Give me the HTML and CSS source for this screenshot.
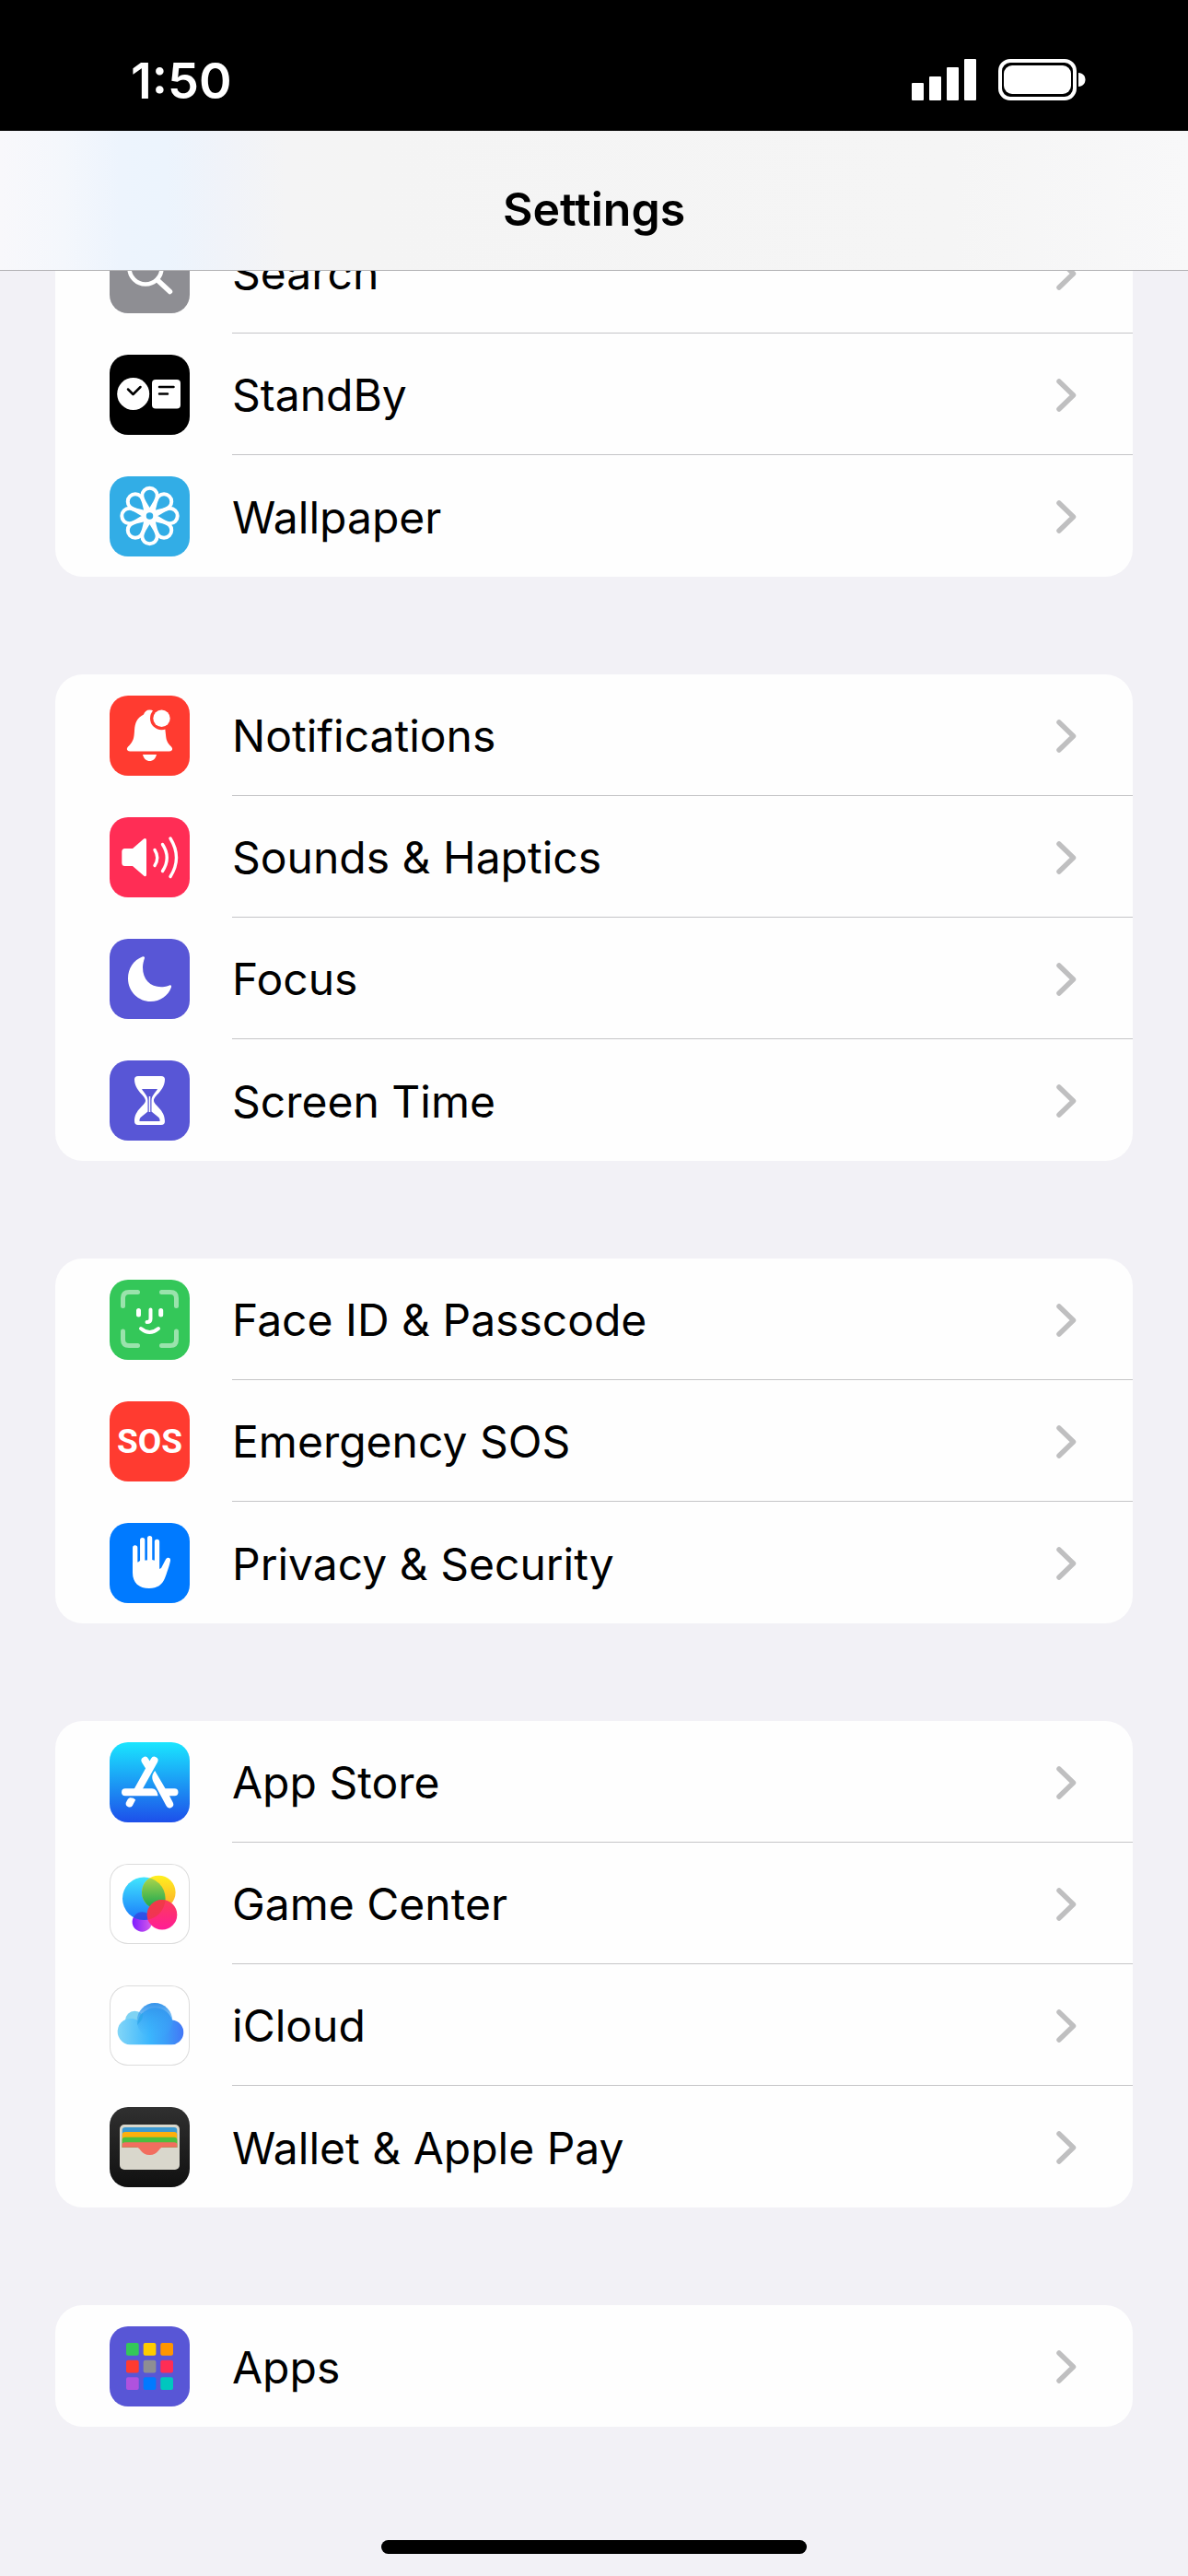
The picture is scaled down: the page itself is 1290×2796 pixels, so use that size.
FILE: index.html
```html
<!DOCTYPE html>
<html lang="en">
<head>
    <meta charset="UTF-8">
    <meta name="viewport" content="width=device-width, initial-scale=1.0">
    <title>Settings</title>
    <link rel="stylesheet" href="styles.css">
</head>
<body>

    <!-- Shared chevron -->
    <svg class="sprite" width="0" height="0" aria-hidden="true">
        <symbol id="chevron" viewBox="0 0 22 36">
            <path d="M3 3 L18.5 18 L3 33" fill="none" stroke="#bfbfc0" stroke-width="5.5" stroke-linecap="round" stroke-linejoin="round"/>
        </symbol>
    </svg>

    <header class="top">
        <div class="status-bar">
            <span class="time">1:50</span>
            <div class="status-icons">
                <svg class="signal" viewBox="0 0 70 46" aria-label="Signal">
                    <rect x="0" y="26" width="13" height="19" rx="1"/>
                    <rect x="19" y="19" width="13" height="26" rx="1"/>
                    <rect x="38" y="9" width="13" height="36" rx="1"/>
                    <rect x="57" y="0" width="13" height="45" rx="1"/>
                </svg>
                <svg class="battery" viewBox="0 0 95 46" aria-label="Battery">
                    <rect x="2" y="2" width="81" height="41" rx="11" fill="none" stroke="#fff" stroke-width="4"/>
                    <rect x="6" y="7" width="73" height="31" rx="9"/>
                    <path d="M87 15 C92 15 94.5 19 94.5 22.5 C94.5 26 92 30 87 30 Z"/>
                </svg>
            </div>
        </div>
        <div class="nav-bar">
            <h1>Settings</h1>
        </div>
    </header>

    <main class="settings">
        <ul class="group">
            <li><a class="row" href="#search">
                <svg class="icon gray" viewBox="0 0 87 87">
                    <circle cx="39" cy="38" r="17.5" fill="none" stroke="#fff" stroke-width="4.5"/>
                    <path d="M52 51 L65.5 63.5" stroke="#fff" stroke-width="5.5" stroke-linecap="round"/>
                </svg>
                <span class="label">Search<svg class="chevron"><use href="#chevron"/></svg></span>
            </a></li>
            <li><a class="row" href="#standby">
                <svg class="icon black" viewBox="0 0 87 87">
                    <circle cx="25.7" cy="42.5" r="17.5" fill="#fff"/>
                    <rect x="46" y="27" width="31" height="31.5" rx="4" fill="#fff"/>
                    <path d="M20 37.5 L25.5 43 L33.5 35 M54 35 H69.5 M54 42.5 H63" fill="none" stroke="#000" stroke-width="2.5" stroke-linecap="round" stroke-linejoin="round"/>
                </svg>
                <span class="label">StandBy<svg class="chevron"><use href="#chevron"/></svg></span>
            </a></li>
            <li><a class="row" href="#wallpaper">
                <svg class="icon cyan" viewBox="0 0 87 87">
                    <defs>
                        <path id="petal" d="M43.5 38.5 C41 32 35.3 27 35.3 21 A8.2 8.2 0 0 1 51.7 21 C51.7 27 46 32 43.5 38.5 Z"/>
                    </defs>
                    <g fill="none" stroke="#fff" stroke-width="4">
                        <use href="#petal"/>
                        <use href="#petal" transform="rotate(45 43.5 43)"/>
                        <use href="#petal" transform="rotate(90 43.5 43)"/>
                        <use href="#petal" transform="rotate(135 43.5 43)"/>
                        <use href="#petal" transform="rotate(180 43.5 43)"/>
                        <use href="#petal" transform="rotate(225 43.5 43)"/>
                        <use href="#petal" transform="rotate(270 43.5 43)"/>
                        <use href="#petal" transform="rotate(315 43.5 43)"/>
                    </g>
                    <circle cx="43.5" cy="43" r="5" fill="#32ade6" stroke="#fff" stroke-width="2.5"/>
                </svg>
                <span class="label">Wallpaper<svg class="chevron"><use href="#chevron"/></svg></span>
            </a></li>
        </ul>

        <ul class="group">
            <li><a class="row" href="#notifications">
                <svg class="icon red" viewBox="0 0 87 87">
                    <path d="M43.5 15.5 C40 15.5 38 17.5 37 20.5 C30 24 27.5 29 27 38 C26.5 46 26 49 21.5 54 C19 56.5 18.6 57.5 19 58.7 Q19.5 60.5 22 60.5 H65 Q67.5 60.5 68 58.7 C68.4 57.5 68 56.5 65.5 54 C61 49 61.5 46 60.5 38 C60 29 57 24 50 20.5 C49 17.5 47 15.5 43.5 15.5 Z" fill="#fff"/>
                    <path d="M36 64 H51 C50 68.5 47 71 43.5 71 C40 71 37 68.5 36 64 Z" fill="#fff"/>
                    <circle cx="56.5" cy="24.7" r="12.5" fill="#ff3b30"/>
                    <circle cx="56.5" cy="24.7" r="9.2" fill="#fff"/>
                </svg>
                <span class="label">Notifications<svg class="chevron"><use href="#chevron"/></svg></span>
            </a></li>
            <li><a class="row" href="#sounds">
                <svg class="icon pink" viewBox="0 0 87 87">
                    <path d="M16.5 34 H25 L36.5 24 C38.5 22.3 40 23 40 25 V62 C40 64.5 38.5 65 36.5 63 L25 53 H16.5 Q13.3 53 13.3 49.5 V37.5 Q13.3 34 16.5 34 Z" fill="#fff"/>
                    <path d="M49 35.5 Q54.5 44 49 52.5 M57.5 29.5 Q67 44 57.5 58.5 M66 23 Q79 44 66 64.5" fill="none" stroke="#fff" stroke-width="3.4" stroke-linecap="round"/>
                </svg>
                <span class="label">Sounds &amp; Haptics<svg class="chevron"><use href="#chevron"/></svg></span>
            </a></li>
            <li><a class="row" href="#focus">
                <svg class="icon indigo" viewBox="0 0 87 87">
                    <path d="M36 19.3 C26 23 20 32.5 20 43 C20 57.5 31.5 68 44.5 68 C55 68 63.5 62 67 52.5 C67.5 50.8 66.5 50 65 50.5 C61 52 58 52.2 56 52.2 C44 52.2 36 44 36 31 C36 27 37 24 38 21 C38.3 19.5 37.3 18.8 36 19.3 Z" fill="#fff"/>
                </svg>
                <span class="label">Focus<svg class="chevron"><use href="#chevron"/></svg></span>
            </a></li>
            <li><a class="row" href="#screen-time">
                <svg class="icon indigo" viewBox="0 0 87 87">
                    <path fill="#fff" fill-rule="evenodd" d="M31 17 H56 Q60 17 60 20.5 C60 33 48 38 48 43.5 C48 49 60 53 60 66 Q60 70 56 70 H31 Q27 70 27 66 C27 53 39 49 39 43.5 C39 38 27 33 27 20.5 Q27 17 31 17 Z M35 31 C37 35 41.5 38 41.5 43.5 V55.5 L33.5 62 Q32 64 32.5 66 H54.5 Q55 64 53.5 62 L45.5 55.5 V43.5 C45.5 38 50 35 52 31 Z"/>
                    <path d="M43.5 39 V56" stroke="#fff" stroke-width="1.5"/>
                </svg>
                <span class="label">Screen Time<svg class="chevron"><use href="#chevron"/></svg></span>
            </a></li>
        </ul>

        <ul class="group">
            <li><a class="row" href="#face-id">
                <svg class="icon green" viewBox="0 0 87 87">
                    <path d="M14.5 28.5 V20 Q14.5 13.5 21 13.5 H30.5 M56.5 13.5 H66 Q72.5 13.5 72.5 20 V28.5 M72.5 56 V65 Q72.5 71.5 66 71.5 H56.5 M30.5 71.5 H21 Q14.5 71.5 14.5 65 V56" fill="none" stroke="#fff" stroke-opacity=".5" stroke-width="5" stroke-linecap="round"/>
                    <path d="M31.5 33.5 V38 M55.7 33.5 V38" stroke="#fff" stroke-width="5" stroke-linecap="round"/>
                    <path d="M44.5 32.5 V42.5 Q44.5 46 40.5 46 M34 53 Q43.5 61 53 53" fill="none" stroke="#fff" stroke-width="4" stroke-linecap="round"/>
                </svg>
                <span class="label">Face ID &amp; Passcode<svg class="chevron"><use href="#chevron"/></svg></span>
            </a></li>
            <li><a class="row" href="#sos">
                <span class="icon red sos">SOS</span>
                <span class="label">Emergency SOS<svg class="chevron"><use href="#chevron"/></svg></span>
            </a></li>
            <li><a class="row" href="#privacy">
                <svg class="icon blue" viewBox="0 0 87 87">
                    <path d="M27.7 27 V50 M35.7 18.7 V50 M43.6 16.7 V50 M51.5 20.5 V50" stroke="#fff" stroke-width="5.3" stroke-linecap="round"/>
                    <path d="M25 43 L31 42.5 L33 41 L46 40 L54 42 V50 L56 49 L61 39.5 C62.5 36.5 66.7 37.5 66 41 C65 46 62 55 60 60 C57 67 52 71 43 71 C32 71 25 65 25 54 Z" fill="#fff"/>
                </svg>
                <span class="label">Privacy &amp; Security<svg class="chevron"><use href="#chevron"/></svg></span>
            </a></li>
        </ul>

        <ul class="group">
            <li><a class="row" href="#app-store">
                <svg class="icon app-store" viewBox="0 0 87 87">
                    <path d="M38.5 19.8 L43.5 28 M48.5 19.8 L30 53" stroke="#fff" stroke-width="8" stroke-linecap="round"/>
                    <path d="M17 50.3 H46 C49.5 50.3 52 53 52.5 58.3 H17 A4 4 0 0 1 17 50.3 Z" fill="#fff"/>
                    <path d="M49.2 31 C46 35 45.5 38.5 47.5 43 L61.5 69 A4 4 0 0 0 68.8 65.5 L65 58.3 H70.5 A4 4 0 0 0 70.5 50.3 H60.5 Z" fill="#fff"/>
                    <path d="M22 60.3 Q26 60 28.2 62.5 L24.8 69 A4 4 0 0 1 17.8 65.5 L20 61.5 Z" fill="#fff"/>
                </svg>
                <span class="label">App Store<svg class="chevron"><use href="#chevron"/></svg></span>
            </a></li>
            <li><a class="row" href="#game-center">
                <svg class="icon white" viewBox="0 0 87 87">
                    <defs>
                        <linearGradient id="gcBlue" x1="0" y1="0" x2="0" y2="1"><stop offset="0" stop-color="#41e6fd"/><stop offset="1" stop-color="#1a79fb"/></linearGradient>
                        <linearGradient id="gcYellow" x1="0" y1="0" x2="0" y2="1"><stop offset="0" stop-color="#fff01e"/><stop offset="1" stop-color="#fda92c"/></linearGradient>
                        <linearGradient id="gcGreen" x1="0" y1="0" x2="0" y2="1"><stop offset="0" stop-color="#b5d84b"/><stop offset="1" stop-color="#0fa451"/></linearGradient>
                        <linearGradient id="gcPink" x1="0" y1="0" x2="0" y2="1"><stop offset="0" stop-color="#fc3d58"/><stop offset="1" stop-color="#ff1c97"/></linearGradient>
                        <linearGradient id="gcPurple"><stop offset="0" stop-color="#7d1dff"/><stop offset="1" stop-color="#d95be9"/></linearGradient>
                        <clipPath id="gcClip"><circle cx="37.3" cy="37.7" r="23.3"/></clipPath>
                    </defs>
                    <circle cx="35.3" cy="63" r="10.7" fill="url(#gcPurple)"/>
                    <circle cx="37.3" cy="37.7" r="23.3" fill="url(#gcBlue)"/>
                    <circle cx="35.3" cy="63" r="10.7" fill="#3a30d8" opacity=".6" clip-path="url(#gcClip)"/>
                    <circle cx="53.3" cy="31" r="18.3" fill="url(#gcYellow)"/>
                    <circle cx="53.3" cy="31" r="18.3" fill="url(#gcGreen)" clip-path="url(#gcClip)"/>
                    <circle cx="57" cy="55.3" r="16.3" fill="url(#gcPink)"/>
                    <circle cx="57" cy="55.3" r="16.3" fill="#e83a3a" opacity=".6" clip-path="url(#gcClip)"/>
                </svg>
                <span class="label">Game Center<svg class="chevron"><use href="#chevron"/></svg></span>
            </a></li>
            <li><a class="row" href="#icloud">
                <svg class="icon white" viewBox="0 0 87 87">
                    <defs>
                        <linearGradient id="cloud" x1="8" y1="50" x2="79" y2="50" gradientUnits="userSpaceOnUse"><stop offset="0" stop-color="#84d6f7"/><stop offset=".5" stop-color="#3bb6fd"/><stop offset=".75" stop-color="#3b9df8"/><stop offset="1" stop-color="#4379f6"/></linearGradient>
                        <linearGradient id="cloudTop" x1="0" y1="0" x2="0" y2="1"><stop offset="0" stop-color="#3191ea"/><stop offset="1" stop-color="#3bb0fb" stop-opacity="0"/></linearGradient>
                    </defs>
                    <circle cx="27.3" cy="38" r="10.3" fill="#7fd3f3"/>
                    <path d="M22.5 64.3 A14.2 14.2 0 1 1 31 38.5 A19.3 19.3 0 0 1 68 37.5 A13.4 13.4 0 0 1 65.7 64.3 Z" fill="url(#cloud)"/>
                    <circle cx="49" cy="38.3" r="19.3" fill="url(#cloudTop)"/>
                    <path d="M30 43 Q31 33 36 29.5 Q38 35 30 43 Z" fill="#2ba6e8" opacity=".7"/>
                </svg>
                <span class="label">iCloud<svg class="chevron"><use href="#chevron"/></svg></span>
            </a></li>
            <li><a class="row" href="#wallet">
                <svg class="icon wallet" viewBox="0 0 87 87">
                    <rect x="11" y="19" width="65" height="49" rx="5" fill="#d9d7cc"/>
                    <path d="M13.7 44 V25 Q13.7 22 17 22 H70 Q73.3 22 73.3 25 V44 Z" fill="#3d99d1"/>
                    <path d="M13.7 44 V30 Q13.7 27 17 27 H70 Q73.3 27 73.3 30 V44 Z" fill="#fdaf0d"/>
                    <path d="M13.7 44 V36 Q13.7 32.7 17 32.7 H70 Q73.3 32.7 73.3 36 V44 Z" fill="#4dbf3e"/>
                    <path d="M13.7 43.7 V41 Q13.7 38.3 17 38.3 H70 Q73.3 38.3 73.3 41 V43.7 H58 C53 43.7 53 52 43.5 52 C34 52 34 43.7 29 43.7 Z" fill="#f26d5f"/>
                </svg>
                <span class="label">Wallet &amp; Apple Pay<svg class="chevron"><use href="#chevron"/></svg></span>
            </a></li>
        </ul>

        <ul class="group">
            <li><a class="row" href="#apps">
                <svg class="icon indigo" viewBox="0 0 87 87">
                    <rect x="18" y="18" width="13.7" height="13.7" rx="2" fill="#34c759"/>
                    <rect x="36.7" y="18" width="13.7" height="13.7" rx="2" fill="#ffcc00"/>
                    <rect x="55.3" y="18" width="13.7" height="13.7" rx="2" fill="#ff9500"/>
                    <rect x="18" y="36.7" width="13.7" height="13.7" rx="2" fill="#ff3b30"/>
                    <rect x="36.7" y="36.7" width="13.7" height="13.7" rx="2" fill="#8e8e93"/>
                    <rect x="55.3" y="36.7" width="13.7" height="13.7" rx="2" fill="#ff2d55"/>
                    <rect x="18" y="55.3" width="13.7" height="13.7" rx="2" fill="#af52de"/>
                    <rect x="36.7" y="55.3" width="13.7" height="13.7" rx="2" fill="#007aff"/>
                    <rect x="55.3" y="55.3" width="13.7" height="13.7" rx="2" fill="#00c7be"/>
                </svg>
                <span class="label">Apps<svg class="chevron"><use href="#chevron"/></svg></span>
            </a></li>
        </ul>
    </main>

    <footer class="home-area">
        <div class="home-indicator"></div>
    </footer>

</body>
</html>
```
FILE: styles.css
```css
* {
    margin: 0;
    padding: 0;
    box-sizing: border-box;
}

body {
    font-family: Inter, 'Liberation Sans', sans-serif;
    font-size: 48px;
    color: #000;
    background-color: #f2f1f6;
    min-height: 100vh;
    display: flex;
    flex-direction: column;
}

.sprite {
    position: absolute;
}

/* Header */
.top {
    position: sticky;
    top: 0;
    z-index: 1;
}

.status-bar {
    display: flex;
    justify-content: space-between;
    align-items: center;
    height: 142px;
    padding: 32px 111px 0 142px;
    background-color: #000;
    color: #fff;
}

.time {
    font-size: 54px;
    font-weight: 600;
}

.status-icons {
    display: flex;
    gap: 24px;
    fill: #fff;
}

.signal {
    width: 70px;
    height: 46px;
}

.battery {
    width: 95px;
    height: 46px;
}

.nav-bar {
    display: flex;
    justify-content: center;
    align-items: center;
    height: 152px;
    padding-top: 18px;
    border-bottom: 1px solid #b2b2b4;
    background: linear-gradient(90deg, #f8f8fb 0, #f4f7fc 70px, #edf4fd 130px, #ecf4fd 180px, #f0f3f9 240px, #f4f4f5 310px, #f4f4f4 400px, #f5f5f5 80%, #f8f8f9 100%);
}

h1 {
    font-size: 50px;
    font-weight: 600;
}

/* List, scrolled partly under the header */
.settings {
    margin-top: -64px;
    padding: 0 60px;
    display: flex;
    flex-direction: column;
    gap: 106px;
}

.group {
    list-style: none;
    background-color: #fefefe;
    border-radius: 30px;
    overflow: hidden;
}

.row {
    display: flex;
    align-items: center;
    gap: 46px;
    height: 132px;
    padding-left: 59px;
    color: #000;
    text-decoration: none;
}

.label {
    flex: 1;
    display: flex;
    justify-content: space-between;
    align-items: center;
    height: 132px;
    padding: 2px 61px 0 0;
    border-bottom: 1px solid #c5c5c7;
}

.group li:last-child .label {
    border-bottom: none;
}

.chevron {
    width: 22px;
    height: 36px;
}

/* Icons */
.icon {
    width: 87px;
    height: 87px;
    border-radius: 20px;
    flex-shrink: 0;
}

.gray {
    background-color: #8e8e93;
}

.black {
    background-color: #000;
}

.cyan {
    background-color: #32ade6;
}

.red {
    background-color: #ff3b30;
}

.pink {
    background-color: #ff2d55;
}

.indigo {
    background-color: #5856d6;
}

.green {
    background-color: #34c759;
}

.blue {
    background-color: #007aff;
}

.white {
    background-color: #fff;
    box-shadow: inset 0 0 0 1px #dcdcdc;
}

.app-store {
    background: linear-gradient(#1ae6ff, #1d4fea);
}

.wallet {
    background: linear-gradient(#303030, #101010);
}

.sos {
    display: flex;
    justify-content: center;
    align-items: center;
    font-family: Roboto, sans-serif;
    font-size: 37px;
    font-weight: 700;
    color: #fff;
}

/* Home indicator */
.home-area {
    margin-top: auto;
    padding-bottom: 24px;
    display: flex;
    justify-content: center;
}

.home-indicator {
    width: 462px;
    height: 15px;
    border-radius: 8px;
    background-color: #000;
}
```
